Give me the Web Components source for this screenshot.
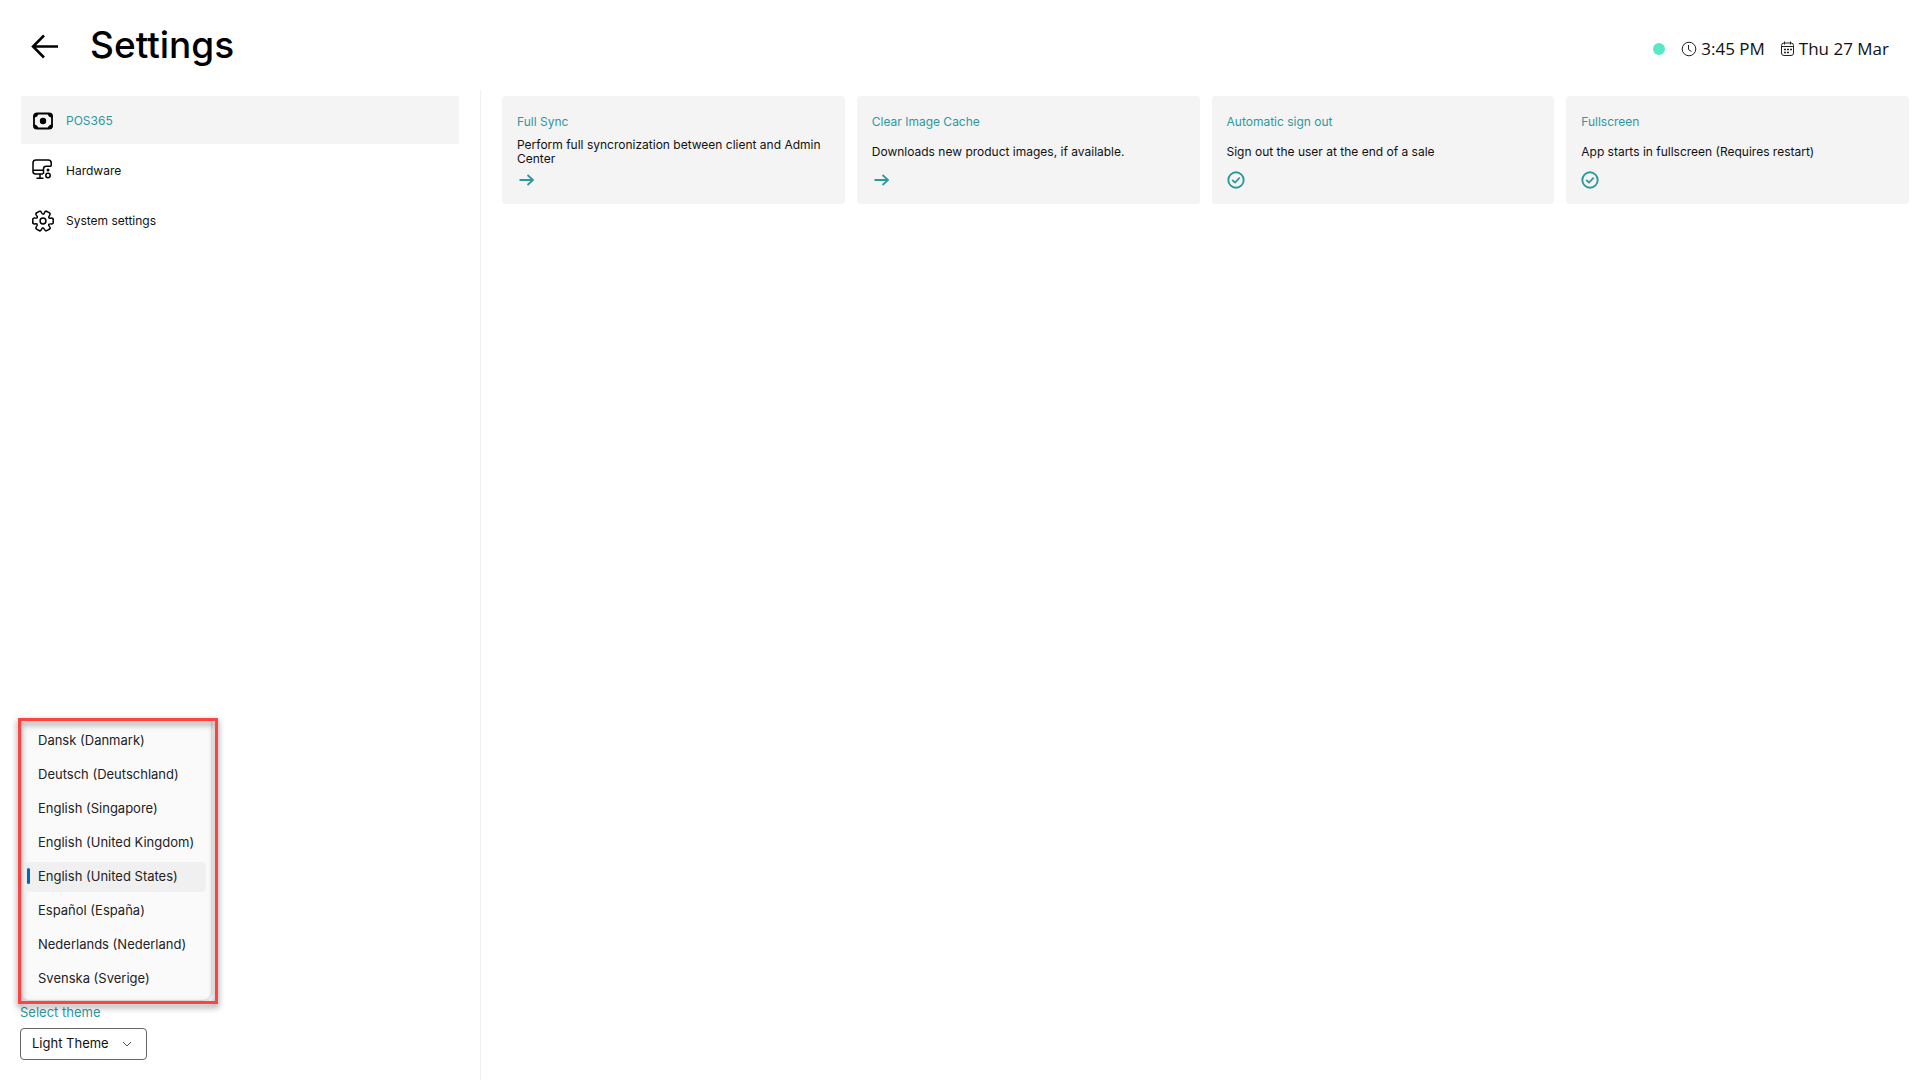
<!DOCTYPE html>
<html lang="en">
<head>
<meta charset="utf-8">
<title>Settings</title>
<style>
    body{
        margin: 0;
        background: #fff;
        color: #111;
        font-family: Inter, "Liberation Sans", sans-serif;
        font-optical-sizing: none;
    }
</style>
</head>
<body>
<settings-page>
    <page-header slot="header">
        Settings
        <status-bar slot="status" time="3:45 PM" date="Thu 27 Mar"></status-bar>
    </page-header>

    <nav-item slot="nav" active>
        <svg slot="icon" width="24" height="24" viewBox="0 0 24 24" fill="none" stroke="#000">
            <rect x="3" y="4.5" width="18" height="15" rx="3" stroke-width="1.800"/>
            <path d="M2.500 8V6.500A2.500 2.500 0 0 1 5 4H7.500A5 5 0 0 1 2.500 8.500zM21.500 8.500V6.500A2.500 2.500 0 0 0 19 4H16.500a5 5 0 0 0 5 4.500zM2.500 15.500v2A2.500 2.500 0 0 0 5 20H7.500a5 5 0 0 0-5-4.500zM21.500 15.500v2A2.500 2.500 0 0 1 19 20H16.500a5 5 0 0 1 5-4.500z" fill="#000" stroke="none"/>
            <circle cx="12" cy="12" r="3.200" fill="#000" stroke="none"/>
        </svg>
        POS365
    </nav-item>
    <nav-item slot="nav">
        <svg slot="icon" width="24" height="24" viewBox="0 0 24 24" fill="none" stroke="#000" stroke-width="1.500">
            <path d="M20.200 7.300V4a3 3 0 0 0-3-3H5a3 3 0 0 0-3 3V12.500a2.500 2.500 0 0 0 2.500 2.500H12M2 11.300h10.500M12.500 15v-5a2.700 2.700 0 0 1 2.700-2.700h5M9 15v4M5.500 19.200h7"/>
            <circle cx="17" cy="16.500" r="2.200"/>
            <circle cx="17" cy="11" r="1.500" fill="#000" stroke="none"/>
        </svg>
        Hardware
    </nav-item>
    <nav-item slot="nav">
        <svg slot="icon" width="24" height="24" viewBox="0 0 24 24" fill="none" stroke="#000" stroke-width="1.500" stroke-linecap="round" stroke-linejoin="round">
            <path id="tooth" d="M22.200 10.400V13.600Q22.200 15 20.400 14.900Q15.800 14.600 18.700 17.800Q19.700 19.300 18.500 20"/>
            <use href="#tooth" transform="rotate(60 12 12)"/>
            <use href="#tooth" transform="rotate(120 12 12)"/>
            <use href="#tooth" transform="rotate(180 12 12)"/>
            <use href="#tooth" transform="rotate(240 12 12)"/>
            <use href="#tooth" transform="rotate(300 12 12)"/>
            <circle cx="12" cy="12" r="2.900"/>
        </svg>
        System settings
    </nav-item>

    <language-menu slot="language" value="English (United States)"></language-menu>
    <theme-picker slot="theme"></theme-picker>

    <setting-card kind="action">
        <span slot="title">Full Sync</span>
        Perform full syncronization between client and Admin Center
    </setting-card>
    <setting-card kind="action">
        <span slot="title">Clear Image Cache</span>
        Downloads new product images, if available.
    </setting-card>
    <setting-card kind="toggle">
        <span slot="title">Automatic sign out</span>
        Sign out the user at the end of a sale
    </setting-card>
    <setting-card kind="toggle">
        <span slot="title">Fullscreen</span>
        App starts in fullscreen (Requires restart)
    </setting-card>
</settings-page>

<script>
class SettingsPage extends HTMLElement{
    constructor(){
        super();
        const shadow = this.attachShadow({mode:'open'});
        shadow.innerHTML = `
            <style>
                :host{
                    display: flex;
                    flex-direction: column;
                    min-height: 100vh;
                }
                .columns{
                    flex: 1;
                    display: grid;
                    grid-template-columns: 25% 1fr;
                }
                aside{
                    display: flex;
                    flex-direction: column;
                    justify-content: space-between;
                    padding: 6px 21px 20px;
                }
                nav{
                    display: grid;
                    gap: 2px;
                }
                .footer{
                    position: relative;
                }
                .cards{
                    display: grid;
                    grid-template-columns: repeat(4, 1fr);
                    gap: 12px;
                    align-content: start;
                    padding: 6px 11px 20px 21px;
                    border-left: 1px solid #f0f0f0;
                }
            </style>
            <slot name="header"></slot>
            <div class="columns">
                <aside>
                    <nav><slot name="nav"></slot></nav>
                    <div class="footer">
                        <slot name="theme"></slot>
                        <slot name="language"></slot>
                    </div>
                </aside>
                <main class="cards"><slot></slot></main>
            </div>`;
    }
}

class PageHeader extends HTMLElement{
    constructor(){
        super();
        const shadow = this.attachShadow({mode:'open'});
        shadow.innerHTML = `
            <style>
                :host{
                    display: flex;
                    align-items: center;
                    height: 90px;
                    padding: 0 31px;
                }
                button{
                    display: flex;
                    padding: 0;
                    margin-right: 31px;
                    border: 0;
                    background: none;
                }
                h1{
                    flex: 1;
                    margin: 0;
                    font-size: 37px;
                    line-height: 44px;
                    font-weight: 500;
                    color: #000;
                }
            </style>
            <button aria-label="Back">
                <svg width="28" height="28" viewBox="0 0 28 28" fill="none" stroke="#000" stroke-width="2.500">
                    <path d="M27 15.500H2.500M13 4.500L2 15.500L13 26.500"/>
                </svg>
            </button>
            <h1><slot></slot></h1>
            <slot name="status"></slot>`;
    }
}

class StatusBar extends HTMLElement{
    constructor(){
        super();
        const shadow = this.attachShadow({mode:'open'});
        shadow.innerHTML = `
            <style>
                :host{
                    display: flex;
                    align-items: center;
                    gap: 16px;
                    padding-top: 8px;
                    font: 17px/24px "Open Sans", "Noto Sans", sans-serif;
                }
                .dot{
                    width: 12px;
                    height: 12px;
                    border-radius: 50%;
                    background: #57e8c5;
                }
                .entry{
                    display: flex;
                    align-items: center;
                    gap: 4px;
                }
            </style>
            <span class="dot"></span>
            <span class="entry">
                <svg width="16" height="16" viewBox="0 0 16 16" fill="none" stroke="#222">
                    <circle cx="8" cy="8" r="6.800"/>
                    <path d="M7.500 4v4.500l3 2"/>
                </svg>
                <time>${this.getAttribute('time')}</time>
            </span>
            <span class="entry">
                <svg width="14" height="16" viewBox="0 0 14 16" fill="none" stroke="#222">
                    <rect x="0.500" y="2" width="12" height="12.500" rx="2.500"/>
                    <path d="M0.500 5.500h12M3.500 0.500v3M9.500 0.500v3"/>
                    <path d="M3 8.500h8M3 11.500h5" stroke-width="1.500" stroke-dasharray="2 1"/>
                </svg>
                <time>${this.getAttribute('date')}</time>
            </span>`;
    }
}

class NavItem extends HTMLElement{
    constructor(){
        super();
        const shadow = this.attachShadow({mode:'open'});
        shadow.innerHTML = `
            <style>
                :host{
                    display: block;
                }
                button{
                    display: flex;
                    align-items: center;
                    gap: 11px;
                    width: 100%;
                    height: 48px;
                    padding: 2px 10px 0;
                    border: 0;
                    background: none;
                    color: #111;
                    font: inherit;
                    font-size: 12px;
                    line-height: 16px;
                    text-align: left;
                }
                :host([active]) button{
                    background: #f4f4f4;
                    color: #2f989d;
                }
                ::slotted(svg){
                    display: block;
                }
            </style>
            <button><slot name="icon"></slot><span><slot></slot></span></button>`;
    }
}

class SettingCard extends HTMLElement{
    constructor(){
        super();
        const shadow = this.attachShadow({mode:'open'});
        const arrow = `
            <button id="control" aria-labelledby="title">
                <svg width="18" height="18" viewBox="0 0 18 18" fill="none" stroke="currentColor" stroke-width="1.800">
                    <path d="M2.500 9H16M10.500 4L16 9L10.500 14"/>
                </svg>
            </button>`;
        const check = `
            <span class="toggle">
                <input type="checkbox" id="control" checked>
                <svg width="18" height="18" viewBox="0 0 18 18" fill="none" stroke="currentColor">
                    <circle cx="9" cy="9" r="7.700" stroke-width="1.900"/>
                    <path class="mark" d="M5.200 9L8 11.500L12.700 6.700" stroke-width="1.700"/>
                </svg>
            </span>`;
        shadow.innerHTML = `
            <style>
                :host{
                    display: grid;
                    grid-template-rows: 20px minmax(38px, auto) 20px;
                    align-items: center;
                    justify-items: start;
                    padding: 16px 15px 14px;
                    border-radius: 4px;
                    background: #f4f4f4;
                    font-size: 12px;
                    line-height: 14px;
                }
                label, button, .toggle{
                    color: #2f989d;
                }
                p{
                    margin: 0;
                    padding-top: 2px;
                }
                button{
                    display: flex;
                    padding: 0;
                    border: 0;
                    background: none;
                }
                .toggle{
                    display: grid;
                }
                .toggle > *{
                    grid-area: 1 / 1;
                }
                input{
                    appearance: none;
                    width: 18px;
                    height: 18px;
                    margin: 0;
                }
                svg{
                    pointer-events: none;
                }
                input:not(:checked) + svg .mark{
                    display: none;
                }
            </style>
            <label id="title" for="control"><slot name="title"></slot></label>
            <p><slot></slot></p>
            ${this.getAttribute('kind') === 'toggle' ? check : arrow}`;
    }
}

class LanguageMenu extends HTMLElement{
    constructor(){
        super();
        const shadow = this.attachShadow({mode:'open'});
        const languages = [
            'Dansk (Danmark)',
            'Deutsch (Deutschland)',
            'English (Singapore)',
            'English (United Kingdom)',
            'English (United States)',
            'Español (España)',
            'Nederlands (Nederland)',
            'Svenska (Sverige)'
        ];
        const options = languages.map(name =>
            `<button role="option" aria-selected="${name === this.getAttribute('value')}">${name}</button>`
        ).join('');
        shadow.innerHTML = `
            <style>
                /* opens upwards, over the sidebar */
                :host{
                    position: absolute;
                    left: -3px;
                    bottom: 56px;
                    width: 200px;
                    display: grid;
                }
                .list, .frame{
                    grid-area: 1 / 1;
                }
                .list{
                    display: grid;
                    gap: 4px;
                    margin: 3px 7px 4px 3px;
                    padding: 5px 5px 6px;
                    border-radius: 0 0 8px 8px;
                    background: #fafafa;
                    box-shadow: 0 0 3px rgba(0,0,0,0.3);
                }
                button{
                    display: flex;
                    align-items: center;
                    height: 30px;
                    padding: 0 9px 2px 1px;
                    border: 0;
                    border-radius: 4px;
                    background: none;
                    color: #222;
                    font: inherit;
                    font-size: 13px;
                    line-height: 20px;
                    white-space: nowrap;
                }
                button::before{
                    content: "";
                    width: 3px;
                    height: 16px;
                    margin-right: 8px;
                    border-radius: 2px;
                }
                button[aria-selected="true"]{
                    background: #f0f0f0;
                }
                button[aria-selected="true"]::before{
                    background: #0067c0;
                }
                .frame{
                    border: 3px solid #ff4343;
                    filter: drop-shadow(0 3px 3px rgba(0,0,0,0.5));
                    pointer-events: none;
                }
            </style>
            <div class="list" role="listbox" aria-label="Language">${options}</div>
            <div class="frame"></div>`;
    }
}

class ThemePicker extends HTMLElement{
    constructor(){
        super();
        const shadow = this.attachShadow({mode:'open'});
        shadow.innerHTML = `
            <style>
                :host{
                    display: grid;
                    justify-items: start;
                    gap: 6px;
                    margin-left: -1px;
                    font-size: 13px;
                    line-height: 20px;
                }
                label{
                    color: #2f989d;
                }
                .box{
                    display: grid;
                    align-items: center;
                }
                select, svg{
                    grid-area: 1 / 1;
                }
                select{
                    appearance: none;
                    width: 127px;
                    height: 32px;
                    padding: 0 32px 2px 11px;
                    border: 1px solid #666;
                    border-radius: 4px;
                    background: #fff;
                    color: #111;
                    font: inherit;
                }
                svg{
                    justify-self: end;
                    margin-right: 15px;
                    pointer-events: none;
                }
            </style>
            <label for="theme">Select theme</label>
            <span class="box">
                <select id="theme"><option>Light Theme</option><option>Dark Theme</option></select>
                <svg width="10" height="10" viewBox="0 0 10 10" fill="none" stroke="#555"><path d="M1 3L5 7L9 3"/></svg>
            </span>`;
    }
}

customElements.define('settings-page', SettingsPage);
customElements.define('page-header', PageHeader);
customElements.define('status-bar', StatusBar);
customElements.define('nav-item', NavItem);
customElements.define('setting-card', SettingCard);
customElements.define('language-menu', LanguageMenu);
customElements.define('theme-picker', ThemePicker);
</script>
</body>
</html>
